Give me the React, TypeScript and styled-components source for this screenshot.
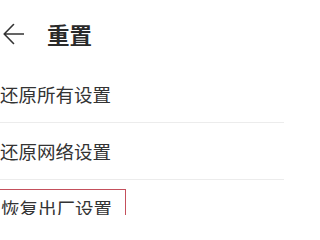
import React from "react";
import styled, { createGlobalStyle } from "styled-components";

const GlobalStyle = createGlobalStyle`
  html, body {
    margin: 0;
    padding: 0;
    background: #ffffff;
  }
  body {
    font-family: "Noto Sans CJK SC", "Noto Sans", sans-serif;
    color: #333333;
    overflow: hidden;
  }
`;

const Screen = styled.div`
  width: 284px;
  height: 215px;
  overflow: hidden;
  background: #ffffff;
  padding-top: 2px;
  box-sizing: border-box;
`;

const Header = styled.header`
  height: 64px;
  display: flex;
  align-items: center;
  padding-left: 3px;
  gap: 23px;
`;

const BackButton = styled.button`
  border: none;
  background: none;
  padding: 0;
  width: 21px;
  height: 22px;
  display: flex;
  align-items: center;
  justify-content: center;
  color: #333;
`;

const Title = styled.h1`
  margin: 0;
  font-size: 22.5px;
  font-weight: 700;
  color: #2a2a2a;
`;

const List = styled.ul`
  list-style: none;
  margin: 0;
  padding: 0;
`;

const Row = styled.li<{ $last?: boolean }>`
  height: 56px;
  display: flex;
  align-items: center;
  border-bottom: ${(p) => (p.$last ? "none" : "1px solid #ececec")};
  font-size: 18.5px;
  color: #333;
`;

const MarkedRow = styled(Row)`
  align-items: flex-start;
  padding-top: 9px;
`;

const Label = styled.span<{ $marked?: boolean }>`
  display: inline-block;
  margin-left: ${(p) => (p.$marked ? "-15px" : "0")};
  padding: ${(p) => (p.$marked ? "7px 13px 10px 15px" : "0")};
  border: ${(p) => (p.$marked ? "1px solid #c4505c" : "none")};
  line-height: 22px;
`;

const BackArrow = () => (
  <svg width="21" height="22" viewBox="0 0 21 22" fill="none">
    <path
      d="M20.5 11H1.5M10.5 1.5L1.2 11L10.5 20.5"
      stroke="#333"
      strokeWidth="1.6"
      strokeLinecap="round"
      strokeLinejoin="round"
    />
  </svg>
);

const items = ["还原所有设置", "还原网络设置"];

export default function App() {
  return (
    <>
      <GlobalStyle />
      <Screen>
        <Header>
          <BackButton aria-label="返回">
            <BackArrow />
          </BackButton>
          <Title>重置</Title>
        </Header>
        <List>
          {items.map((t) => (
            <Row key={t}>
              <Label>{t}</Label>
            </Row>
          ))}
          <MarkedRow $last>
            <Label $marked>恢复出厂设置</Label>
          </MarkedRow>
        </List>
      </Screen>
    </>
  );
}
